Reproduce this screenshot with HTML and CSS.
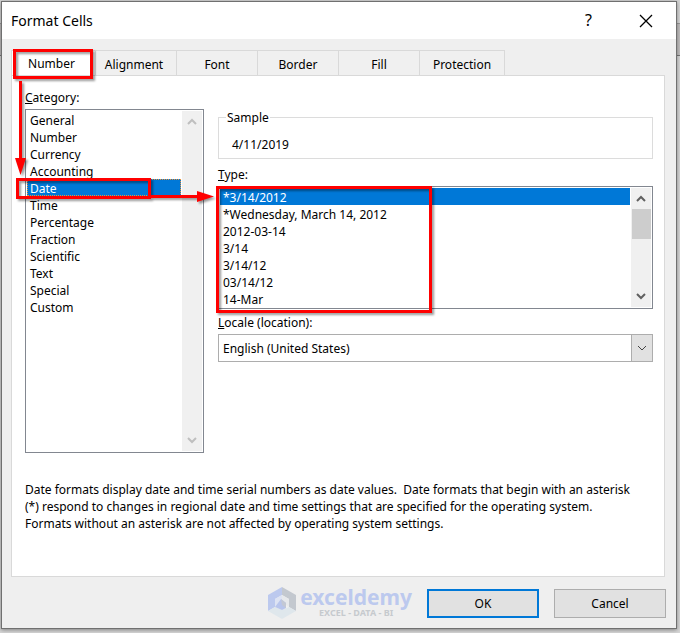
FILE: index.html
```
<!DOCTYPE html>
<html lang="en">
<head>
  <meta charset="UTF-8" />
  <meta name="viewport" content="width=device-width, initial-scale=1.0"/>
  <title>Format Cells</title>
  <link rel="stylesheet" href="styles.css">
</head>
<body>
  <div class="dialog">
    <header class="titlebar">
      <h1>Format Cells</h1>
      <button class="title-btn" type="button" aria-label="Help">?</button>
      <button class="title-btn" type="button" aria-label="Close">
        <svg width="14" height="14" viewBox="0 0 14 14"><path d="M1 1L13 13M13 1L1 13" stroke="#000" stroke-width="1.3"/></svg>
      </button>
    </header>

    <div class="content">
      <nav class="tabs" role="tablist">
        <button class="tab active" type="button" role="tab" aria-selected="true">Number</button>
        <button class="tab" type="button" role="tab">Alignment</button>
        <button class="tab" type="button" role="tab">Font</button>
        <button class="tab" type="button" role="tab">Border</button>
        <button class="tab" type="button" role="tab">Fill</button>
        <button class="tab" type="button" role="tab">Protection</button>
      </nav>

      <main class="panel">
        <div class="columns">
          <div class="category">
            <label for="category"><u>C</u>ategory:</label>
            <div class="listbox">
              <select id="category" size="12">
                <option>General</option>
                <option>Number</option>
                <option>Currency</option>
                <option>Accounting</option>
                <option selected>Date</option>
                <option>Time</option>
                <option>Percentage</option>
                <option>Fraction</option>
                <option>Scientific</option>
                <option>Text</option>
                <option>Special</option>
                <option>Custom</option>
              </select>
              <div class="scrollbar disabled">
                <svg width="10" height="7" viewBox="0 0 10 7"><path d="M1 6L5 2L9 6"/></svg>
                <svg width="10" height="7" viewBox="0 0 10 7"><path d="M1 1L5 5L9 1"/></svg>
              </div>
            </div>
          </div>

          <div class="settings">
            <fieldset class="sample">
              <legend>Sample</legend>
              4/11/2019
            </fieldset>

            <label for="type"><u>T</u>ype:</label>
            <div class="listbox">
              <select id="type" size="7">
                <option selected>*3/14/2012</option>
                <option>*Wednesday, March 14, 2012</option>
                <option>2012-03-14</option>
                <option>3/14</option>
                <option>3/14/12</option>
                <option>03/14/12</option>
                <option>14-Mar</option>
              </select>
              <div class="scrollbar">
                <svg width="10" height="7" viewBox="0 0 10 7"><path d="M1 6L5 2L9 6"/></svg>
                <span class="thumb"></span>
                <svg width="10" height="7" viewBox="0 0 10 7"><path d="M1 1L5 5L9 1"/></svg>
              </div>
            </div>

            <label for="locale"><u>L</u>ocale (location):</label>
            <div class="combo">
              <select id="locale">
                <option>English (United States)</option>
              </select>
              <span class="combo-arrow">
                <svg width="10" height="6" viewBox="0 0 10 6"><path d="M1 1L5 5L9 1"/></svg>
              </span>
            </div>
          </div>
        </div>

        <p class="description">
          Date formats display date and time serial numbers as date values.&nbsp; Date formats that begin with an asterisk<br>
          (*) respond to changes in regional date and time settings that are specified for the operating system.<br>
          Formats without an asterisk are not affected by operating system settings.
        </p>
      </main>

      <footer class="actions">
        <div class="brand">
          <svg width="28" height="32" viewBox="0 0 28 32">
            <path d="M14 0L0 8V24L7 20V12L14 8Z" fill="#bcc9ee"/>
            <path d="M14 0L28 8V24L21 20V12L14 8Z" fill="#c3c8cf"/>
            <path d="M0 24L7 20L14 23L21 20L28 24L14 32Z" fill="#dfe7ec"/>
            <path d="M7 12L14 8V15L7 20Z" fill="#dde3f3"/>
            <path d="M14 8L21 12V20L14 15Z" fill="#e6e8eb"/>
            <path d="M7 20L13 12L18 16V21L14 23Z" fill="#b8c5ec"/>
            <path d="M13 12L18 16V21L14 18Z" fill="#c3c8d4"/>
          </svg>
          <div class="brand-text">
            <strong>exceldemy</strong>
            <small>EXCEL - DATA - BI</small>
          </div>
        </div>
        <button class="btn primary" type="button">OK</button>
        <button class="btn" type="button">Cancel</button>
      </footer>
    </div>
  </div>

  <!-- tutorial highlights drawn over the dialog -->
  <svg class="highlights" width="680" height="633" viewBox="0 0 680 633">
    <g fill="none" stroke="#f00" stroke-width="3">
      <rect x="14.500" y="50.500" width="77" height="27"/>
      <rect x="17.500" y="179.500" width="132" height="18"/>
      <rect x="217.500" y="187.500" width="213" height="124"/>
      <path d="M20.500 81V160M151 196.500H199"/>
    </g>
    <path d="M15 158H26L20.500 175ZM197 191V202L214 196.500Z" fill="#f00"/>
  </svg>
</body>
</html>
```

FILE: styles.css
```
* {
  box-sizing: border-box;
}

body {
  margin: 0;
  padding: 1px 3px 4px 1px;
  /* spreadsheet edge showing behind the dialog */
  background: linear-gradient(#d6d6d6 23px, #999 23px 24px, #c0bebe 24px 55px, #777 55px 56px, #d6d6d6 56px);
  color: #000;
  font-family: "Noto Sans", "Open Sans", sans-serif;
  font-size: 12px;
  line-height: 17px;
}

button,
select {
  font: inherit;
  color: inherit;
}

.dialog {
  background: #efefef;
  border: 1px solid #707070;
  box-shadow: 0 1px 4px rgba(0, 0, 0, 0.4);
}

.titlebar {
  display: flex;
  align-items: center;
  height: 37px;
  padding: 0 2px 0 9px;
  background: #fff;
}

.titlebar h1 {
  flex: 1;
  margin: 0;
  font-size: 14px;
  font-weight: normal;
}

.title-btn {
  display: flex;
  align-items: center;
  justify-content: center;
  width: 57px;
  height: 36px;
  padding: 0;
  border: 0;
  background: none;
  font-size: 16px;
}

.content {
  padding: 11px 11px 9px 9px;
}

.tabs {
  display: flex;
}

.tab {
  width: 81px;
  height: 25px;
  padding: 3px 0 0;
  border: 1px solid #d9d9d9;
  border-width: 1px 1px 0 0;
  background: #f0f0f0;
}

.tab:nth-child(2) {
  padding-right: 4px;
}

.tab:last-child {
  width: 85px;
}

.tab.active {
  width: 85px;
  padding: 0 4px 0 0;
  border-left-width: 1px;
  background: #fff;
}

.panel {
  padding: 13px 11px 44px 13px;
  border: 1px solid #d9d9d9;
  background: #fff;
}

.columns {
  display: flex;
  gap: 14px;
}

.category {
  display: flex;
  flex-direction: column;
  width: 179px;
}

.category .listbox {
  height: 344px;
}

.settings {
  flex: 1;
}

label {
  display: block;
  margin-bottom: 3px;
}

.listbox {
  display: flex;
  padding: 1px;
  border: 1px solid #828790;
}

.listbox select {
  flex: 1;
  min-width: 0;
  padding: 0;
  border: 0;
  border-radius: 0;
  outline: 0;
  background: #fff;
  overflow: hidden;
  scrollbar-width: none;
}

.listbox option {
  height: 17px;
  min-height: 17px;
  padding: 1px 3px 0;
  line-height: 16px;
}

.listbox option:checked {
  background: linear-gradient(#0078d7, #0078d7);
  -webkit-text-fill-color: #fff;
}

#category option:checked {
  outline: 1px dotted #e8913a;
  outline-offset: -1px;
}

.scrollbar {
  display: flex;
  flex-direction: column;
  align-items: center;
  width: 20px;
  margin-left: 1px;
  padding: 7px 0;
  background: #f0f0f0;
}

.scrollbar svg:last-child {
  margin-top: auto;
}

.scrollbar path {
  fill: none;
  stroke: #606060;
  stroke-width: 2;
}

.scrollbar.disabled path {
  stroke: #bfbfbf;
}

.thumb {
  width: 19px;
  height: 30px;
  margin-top: 7px;
  background: #cdcdcd;
}

.sample {
  margin: 20px 0 7px;
  padding: 10px 13px 5px;
  border: 1px solid #dcdcdc;
}

.sample legend {
  margin: 0 0 0 -6px;
  padding: 0 1px;
}

.settings .listbox {
  height: 123px;
  margin-bottom: 5px;
}

.combo {
  display: grid;
  height: 28px;
}

.combo select,
.combo-arrow {
  grid-area: 1 / 1;
}

.combo select {
  appearance: none;
  padding: 0 4px;
  border: 1px solid #adadad;
  border-radius: 0;
  background: #fff;
}

.combo-arrow {
  display: flex;
  align-items: center;
  justify-content: center;
  justify-self: end;
  width: 22px;
  border: 1px solid #adadad;
  background: #e1e1e1;
  pointer-events: none;
}

.combo-arrow path {
  fill: none;
  stroke: #444;
}

.description {
  margin: 28px 0 0;
}

.actions {
  display: flex;
  align-items: center;
  justify-content: flex-end;
  gap: 15px;
  padding-top: 10px;
  margin-right: -1px;
}

.brand {
  display: flex;
  gap: 4px;
}

.brand-text {
  display: flex;
  flex-direction: column;
}

.brand strong {
  color: #bcc9ee;
  font-size: 21px;
  line-height: 21px;
}

.brand small {
  color: #c6cace;
  font-size: 9px;
  font-weight: bold;
  line-height: 10px;
  text-align: center;
}

.btn {
  width: 112px;
  height: 29px;
  padding: 0;
  border: 1px solid #adadad;
  background: #e1e1e1;
}

.btn.primary {
  border: 2px solid #0078d7;
}

.highlights {
  position: absolute;
  top: 0;
  left: 0;
  pointer-events: none;
  filter: drop-shadow(2px 2px 1px rgba(0, 0, 0, 0.4));
}
```
